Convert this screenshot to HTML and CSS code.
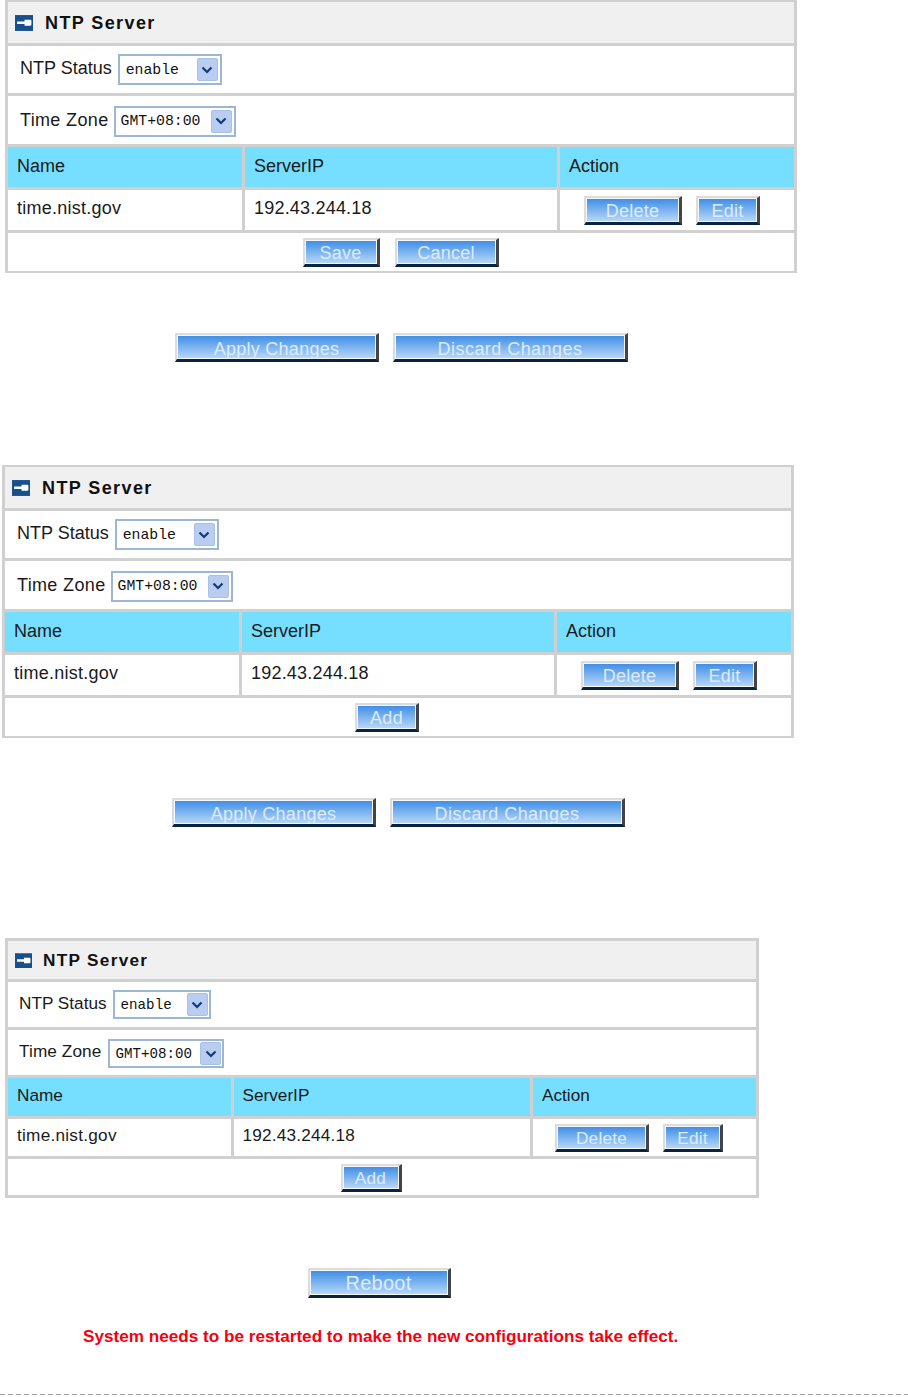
FILE: index.html
```html
<!DOCTYPE html>
<html lang="en">
<head>
<meta charset="utf-8">
<title>NTP Server</title>
<link rel="stylesheet" href="styles.css">
</head>
<body>
<main class="page">
  <section class="panel panel-a">
    <header class="title"><svg class="key" viewBox="0 0 17 15"><rect width="17" height="15" fill="#17508c"/><path d="M2 6h7V4.500h5.500q1 0 1 1V9q0 1-1 1H9V8.500H2z" fill="#fff"/></svg><h2>NTP Server</h2></header>
    <div class="field"><label>NTP Status</label><span class="select sel-status"><span class="val">enable</span><span class="arrow"><svg viewBox="0 0 12 8"><path d="M1.500 1.500 6 6l4.500-4.500" fill="none" stroke="#123a78" stroke-width="2.200"/></svg></span></span></div>
    <div class="field field-zone"><label class="lab-zone">Time Zone</label><span class="select sel-zone"><span class="val">GMT+08:00</span><span class="arrow"><svg viewBox="0 0 12 8"><path d="M1.500 1.500 6 6l4.500-4.500" fill="none" stroke="#123a78" stroke-width="2.200"/></svg></span></span></div>
    <div class="grid head"><div>Name</div><div>ServerIP</div><div>Action</div></div>
    <div class="grid body"><div class="host">time.nist.gov</div><div class="ip">192.43.244.18</div><div class="actions"><button class="btn w-del">Delete</button><button class="btn w-edit">Edit</button></div></div>
    <div class="foot"><button class="btn w-save">Save</button><button class="btn w-cancel">Cancel</button></div>
  </section>
  <div class="changes changes-a"><button class="btn w-apply">Apply Changes</button><button class="btn w-discard">Discard Changes</button></div>

  <section class="panel panel-b">
    <header class="title"><svg class="key" viewBox="0 0 17 15"><rect width="17" height="15" fill="#17508c"/><path d="M2 6h7V4.500h5.500q1 0 1 1V9q0 1-1 1H9V8.500H2z" fill="#fff"/></svg><h2>NTP Server</h2></header>
    <div class="field"><label>NTP Status</label><span class="select sel-status"><span class="val">enable</span><span class="arrow"><svg viewBox="0 0 12 8"><path d="M1.500 1.500 6 6l4.500-4.500" fill="none" stroke="#123a78" stroke-width="2.200"/></svg></span></span></div>
    <div class="field field-zone"><label class="lab-zone">Time Zone</label><span class="select sel-zone"><span class="val">GMT+08:00</span><span class="arrow"><svg viewBox="0 0 12 8"><path d="M1.500 1.500 6 6l4.500-4.500" fill="none" stroke="#123a78" stroke-width="2.200"/></svg></span></span></div>
    <div class="grid head"><div>Name</div><div>ServerIP</div><div>Action</div></div>
    <div class="grid body"><div class="host">time.nist.gov</div><div class="ip">192.43.244.18</div><div class="actions"><button class="btn w-del">Delete</button><button class="btn w-edit">Edit</button></div></div>
    <div class="foot foot-add"><button class="btn w-add">Add</button></div>
  </section>
  <div class="changes changes-b"><button class="btn w-apply">Apply Changes</button><button class="btn w-discard">Discard Changes</button></div>

  <section class="panel panel-c">
    <header class="title"><svg class="key" viewBox="0 0 17 15"><rect width="17" height="15" fill="#17508c"/><path d="M2 6h7V4.500h5.500q1 0 1 1V9q0 1-1 1H9V8.500H2z" fill="#fff"/></svg><h2>NTP Server</h2></header>
    <div class="field"><label>NTP Status</label><span class="select sel-status"><span class="val">enable</span><span class="arrow"><svg viewBox="0 0 12 8"><path d="M1.500 1.500 6 6l4.500-4.500" fill="none" stroke="#123a78" stroke-width="2.200"/></svg></span></span></div>
    <div class="field field-zone"><label class="lab-zone">Time Zone</label><span class="select sel-zone"><span class="val">GMT+08:00</span><span class="arrow"><svg viewBox="0 0 12 8"><path d="M1.500 1.500 6 6l4.500-4.500" fill="none" stroke="#123a78" stroke-width="2.200"/></svg></span></span></div>
    <div class="grid head"><div>Name</div><div>ServerIP</div><div>Action</div></div>
    <div class="grid body"><div class="host">time.nist.gov</div><div class="ip">192.43.244.18</div><div class="actions"><button class="btn w-del">Delete</button><button class="btn w-edit">Edit</button></div></div>
    <div class="foot foot-add"><button class="btn w-add">Add</button></div>
  </section>
  <div class="reboot-row"><button class="btn w-reboot">Reboot</button></div>
  <p class="notice">System needs to be restarted to make the new configurations take effect.</p>
  <div class="rule"></div>
</main>
</body>
</html>
```
FILE: styles.css
```css
* { box-sizing: border-box; }
html, body { margin: 0; padding: 0; background: #fff; }
body { font-family: "Liberation Sans", Arial, sans-serif; color: #1a1a1a; }
.page { width: 908px; height: 1397px; overflow: hidden; display: flex; flex-direction: column; }

.panel { display: flex; flex-direction: column; gap: 3px; background: #d0d0d0; padding: 2px 3px; font-size: 18px; width: 792px; }
.panel-a { margin-left: 5px; height: 273px; --c1: 234px; --c2: 312px; }
.panel-b { margin-left: 2px; margin-top: 103px; height: 273px; --c1: 234px; --c2: 312px; }
.panel-c { margin-left: 5px; margin-top: 111px; height: 260px; width: 754px; padding: 3px; font-size: 17.200px; --c1: 222.500px; --c2: 296.500px; }

.title { height: 41px; background: #f0f0f0; display: flex; align-items: center; gap: 12px; padding: 1px 0 0 7px; flex: none; }
.key { width: 18px; height: 16px; flex: none; }
.title h2 { margin: 0; font-size: 18px; font-weight: 700; letter-spacing: 1.400px; color: #111; }
.panel-c .title { height: 38px; gap: 11px; }
.panel-c .key { width: 17px; height: 15.500px; }
.panel-c .title h2 { font-size: 17.200px; letter-spacing: 1.300px; }

.field { height: 47px; flex: none; background: #fff; display: flex; align-items: center; padding-left: 12px; gap: 6px; }
.field-zone { height: 48px; gap: 5px; }
.field label { position: relative; top: -1px; }
.field .lab-zone { top: 0; letter-spacing: .35px; }
.select { height: 31px; border: 2px solid #9db6d3; background: #fff; display: flex; align-items: center; justify-content: space-between; padding: 0 2px 0 6px; font-family: "Liberation Mono", monospace; font-size: 14.800px; color: #111; }
.sel-status { width: 104px; }
.sel-zone { width: 122px; padding-left: 5px; margin-top: 2px; }
.panel-c .field { height: 45px; padding-left: 11px; }
.panel-c .field-zone { gap: 7px; }
.panel-c .field .lab-zone { letter-spacing: .1px; top: -1px; }
.panel-c .select { height: 29px; font-size: 14.200px; padding-right: 1px; }
.panel-c .sel-status { width: 98px; }
.panel-c .sel-zone { width: 116px; padding-left: 5px; }
.arrow { width: 21px; height: 23px; background: #b9cdf0; border: 1px solid #a9c0e8; border-radius: 2px; display: flex; align-items: center; justify-content: center; }
.arrow svg { width: 12px; height: 8px; display: block; }

.grid { display: grid; grid-template-columns: var(--c1) var(--c2) 1fr; column-gap: 3px; flex: none; height: 40px; }
.grid > div { display: flex; align-items: center; padding-left: 9px; }
.head > div { background: #76dfff; padding-bottom: 2px; }
.body > div { background: #fff; padding-bottom: 3px; }
.panel-c .grid { height: 37.500px; }
.host { letter-spacing: .25px; }
.ip { letter-spacing: .2px; }
.body > .actions { padding: 0 0 0 24px; gap: 14px; }
.panel-c .body > .actions { padding: 1px 0 0 22px; }

.foot { flex: 1 1 0; background: #fff; display: flex; justify-content: center; align-items: center; gap: 15px; }
.panel-a .foot { padding-right: 1px; }
.foot-add { padding-right: 22px; }
.panel-c .foot { padding-top: 2px; }

.btn { height: 29px; padding: 0; font: inherit; font-size: 18px; letter-spacing: .25px; color: #dcecfb; line-height: 1; padding-top: 3px; border-style: solid; border-width: 2px 3px 3px 2px; border-color: #dcdcdc #444 #0c2340 #dcdcdc; background: linear-gradient(#3b8be6, #bcdaf7); box-shadow: inset 0 0 0 1px #f4f8fc; }
.w-del { width: 98px; }
.w-edit { width: 64px; }
.w-save { width: 77px; }
.w-cancel { width: 104px; }
.w-add { width: 64px; }
.w-apply { width: 204px; letter-spacing: .25px; }
.w-discard { width: 235px; letter-spacing: .45px; }
.w-reboot { width: 143px; height: 30px; font-size: 20px; padding-top: 0; }
.panel-c .btn { height: 28px; font-size: 17.200px; }
.panel-c .w-del { width: 94px; }
.panel-c .w-edit { width: 60px; }
.panel-c .w-add { width: 61px; }

.changes { display: flex; gap: 14px; flex: none; margin-top: 60px; }
.changes-a { margin-left: 175px; }
.changes-b { margin-left: 172px; }
.reboot-row { margin: 70px 0 0 307.500px; flex: none; display: flex; }

.notice { margin: 28px 0 0 83px; font-size: 17.150px; font-weight: 700; color: #f5000f; line-height: 20px; flex: none; }
.rule { margin-top: 48px; height: 1px; flex: none; background: repeating-linear-gradient(90deg, #a0a0a0 0 5px, transparent 5px 8px); }
```
